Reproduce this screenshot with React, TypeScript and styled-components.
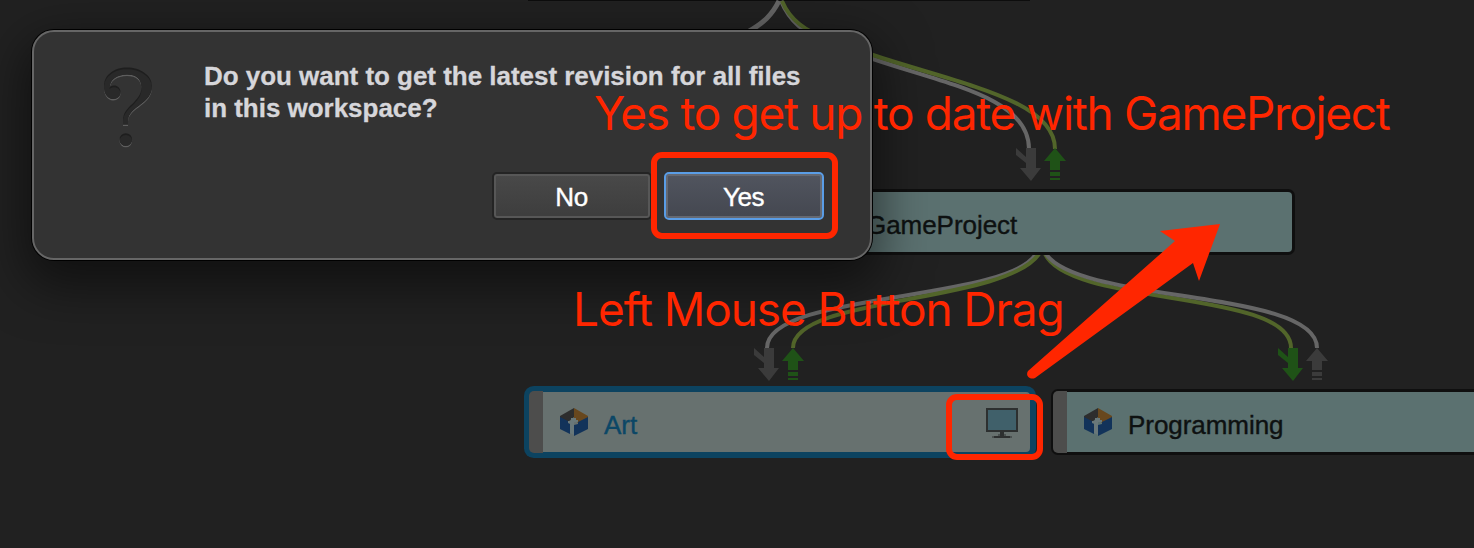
import React from "react";
import styled, { createGlobalStyle } from "styled-components";

const Global = createGlobalStyle`
  body { margin: 0; background: #212121; overflow: hidden; }
`;

const Canvas = styled.main`
  position: relative;
  width: 1474px;
  height: 548px;
  overflow: hidden;
  background: #212121;
  font-family: "Liberation Sans", Arial, sans-serif;
`;

const Links = styled.svg`
  position: absolute;
  inset: 0;
  fill: none;
`;

const Node = styled.div<{ $x: number; $y: number; $selected?: boolean }>`
  position: absolute;
  left: ${(p) => p.$x}px;
  top: ${(p) => p.$y}px;
  width: 500px;
  height: 60px;
  display: flex;
  align-items: center;
  border-radius: 4px;
  background: ${(p) => (p.$selected ? "#67716f" : "#5b7170")};
  color: ${(p) => (p.$selected ? "#0c4766" : "#0e1111")};
  box-shadow: 0 0 0 ${(p) => (p.$selected ? "6px #0c4360" : "3px #0f0f0f")};
`;

const Handle = styled.div`
  flex: none;
  width: 14px;
  height: 62px;
  margin: 0 17px 0 -1px;
  border-radius: 5px 0 0 5px;
  background: #4d4d4c;
`;

const NodeLabel = styled.span`
  font-size: 26px;
  line-height: 30px;
  margin: 5px 0 0 16px;
  letter-spacing: -0.05px;
  -webkit-text-stroke: 0.4px currentColor;
`;

const MonitorSlot = styled.div`
  display: flex;
  margin: 2px 12px 0 auto;
`;

const Dialog = styled.section`
  position: absolute;
  left: 32px;
  top: 30px;
  box-sizing: border-box;
  width: 840px;
  height: 230px;
  padding: 28px 46px 38px 68px;
  display: flex;
  border: 2px solid #666;
  border-radius: 22px;
  background: #333;
  box-shadow: 0 0 0 1px #000, 0 18px 50px 8px rgba(0, 0, 0, 0.5);
`;

const QuestionMark = styled.svg`
  flex: none;
  margin-top: 6px;
`;

const DialogBody = styled.div`
  flex: 1;
  display: flex;
  flex-direction: column;
  justify-content: space-between;
  margin-left: 46px;
`;

const Message = styled.p`
  margin: 0;
  font-size: 26px;
  font-weight: 700;
  line-height: 32px;
  letter-spacing: -0.03px;
  white-space: nowrap;
  color: #d6d6da;
  -webkit-text-stroke: 0.3px #d6d6da;
`;

const Buttons = styled.div`
  display: flex;
  justify-content: flex-end;
  gap: 12px;
`;

const Button = styled.button<{ $primary?: boolean }>`
  width: 160px;
  height: 48px;
  padding: 2px 1px 0 0;
  border: 2px solid ${(p) => (p.$primary ? "#5a9de6" : "#242424")};
  border-radius: 5px;
  font: 26px "Liberation Sans", Arial, sans-serif;
  letter-spacing: -0.4px;
  color: #fff;
  -webkit-text-stroke: 0.4px #fff;
  background: ${(p) => (p.$primary ? "linear-gradient(#51555f, #444750)" : "linear-gradient(#494949, #3d3d3d)")};
  box-shadow: inset 0 0 0 2px ${(p) => (p.$primary ? "#656972" : "#575757")};
`;

const Frame = styled.div<{ $x: number; $y: number; $w: number; $h: number }>`
  position: absolute;
  left: ${(p) => p.$x}px;
  top: ${(p) => p.$y}px;
  box-sizing: border-box;
  width: ${(p) => p.$w}px;
  height: ${(p) => p.$h}px;
  border: 6px solid #ff2600;
  border-radius: 11px;
`;

const Note = styled.div<{ $x: number; $y: number; $ls: number }>`
  position: absolute;
  left: ${(p) => p.$x}px;
  top: ${(p) => p.$y}px;
  font: 400 46px/56px Inter, sans-serif;
  font-feature-settings: "calt" 0;
  letter-spacing: ${(p) => p.$ls}px;
  white-space: nowrap;
  color: #ff2600;
`;

const CubeIcon = () => (
  <svg width="28" height="28" viewBox="0 0 28 28">
    <path d="M14 0 0 8v2l8 4 6-5z" fill="#2d2d2d" />
    <path d="M14 0l14 8v2l-10 5-4-5z" fill="#68471d" />
    <path d="M0 9l8 4v2l2 1v10L0 21zM28 9l-10 5v2l-4 1v11l14-7z" fill="#12335a" />
    <path d="M11 10h5v2h2v2h-4v13l-4-2V15H8v-2h3z" fill="#69787a" />
  </svg>
);

const MonitorIcon = () => (
  <svg width="32" height="30" viewBox="0 0 32 30">
    <path d="M1 1h30v22H1z" fill="#40606a" stroke="#2d3030" strokeWidth="2" />
    <path d="M14 24h4v4h6v2H8v-2h6z" fill="#2d3030" />
    <path d="M6 28h2v2H6zM24 28h2v2h-2zM12 26h2v2h-2zM18 26h2v2h-2z" fill="#4a5150" />
  </svg>
);

const questionShape =
  "M21 58.5H26V54C27 40 50 38 50 20C50 9 38 1.5 25 1.5C12 1.5 2 9 2 20C2 28 6 33 11 33C15.5 33 18.5 30 18.5 26C18.5 22 15.5 19.5 12 19.5C9.5 19.5 8 20.5 7.5 21.5C8 13.5 15 8.5 25 8.5C34 8.5 39.5 13 39.5 21C39.5 36 21 40 21 54ZM17.5 73.5a6.3 6.3 0 1 0 12.6 0a6.3 6.3 0 1 0 -12.6 0";

const DownArrow = ({ x, y, color }: { x: number; y: number; color: string }) => (
  <path transform={`translate(${x} ${y})`} fill={color} d="M10 0h10v20h5L15 33 4 20h6v-5L0 7V0l10 9z" />
);

const UpArrow = ({ x, y, color }: { x: number; y: number; color: string }) => (
  <path transform={`translate(${x} ${y})`} fill={color} d="M11 0l11 13h-6v9H6v-9H0zM6 24h10v4H6zM6 30h10v2H6z" />
);

export default function App() {
  return (
    <Canvas>
      <Global />
      <Links width="1474" height="548">
        <path d="M528 0H1030" stroke="#0d0d0d" strokeWidth="2" />
        <g strokeWidth="4">
          <path d="M779 1C772 15 764 23 746 33" stroke="#666" strokeWidth="5" />
          <path d="M781 1C789 20 803 34 830 44L873 59C950 85 1029 98 1029 149" stroke="#666" />
          <path d="M782 1C790 20 805 31 830 40L873 55C960 84 1055 100 1055 149" stroke="#52652a" />
          <path d="M1036 254C1006 302 767 292 767 348" stroke="#666" />
          <path d="M1039 254C1004 304 793 296 793 348" stroke="#52652a" />
          <path d="M1045 254C1070 307 1291 289 1291 348" stroke="#52652a" />
          <path d="M1046 254C1080 304 1317 289 1317 348" stroke="#666" />
        </g>
        <DownArrow x={1016} y={148} color="#3b3b3b" />
        <UpArrow x={1044} y={148} color="#1f5217" />
        <DownArrow x={754} y={348} color="#3b3b3b" />
        <UpArrow x={782} y={348} color="#1f5217" />
        <DownArrow x={1278} y={348} color="#1f5217" />
        <UpArrow x={1306} y={348} color="#3b3b3b" />
      </Links>

      <Node $x={792} $y={192}>
        <Handle />
        <CubeIcon />
        <NodeLabel>GameProject</NodeLabel>
      </Node>
      <Node $x={530} $y={392} $selected>
        <Handle />
        <CubeIcon />
        <NodeLabel>Art</NodeLabel>
        <MonitorSlot>
          <MonitorIcon />
        </MonitorSlot>
      </Node>
      <Node $x={1054} $y={392}>
        <Handle />
        <CubeIcon />
        <NodeLabel>Programming</NodeLabel>
      </Node>

      <Dialog>
        <QuestionMark width="56" height="84" viewBox="0 0 56 84">
          <clipPath id="question">
            <path d={questionShape} />
          </clipPath>
          <path d={questionShape} fill="#5e5e5e" transform="translate(0 1.5)" />
          <path d={questionShape} fill="#1e1e1e" />
          <g clipPath="url(#question)">
            <path d={questionShape} fill="#292929" transform="translate(0 1.8)" />
          </g>
        </QuestionMark>
        <DialogBody>
          <Message>
            Do you want to get the latest revision for all files
            <br />
            in this workspace?
          </Message>
          <Buttons>
            <Button>No</Button>
            <Button $primary>Yes</Button>
          </Buttons>
        </DialogBody>
      </Dialog>

      <Note $x={594} $y={85} $ls={-1.32}>Yes to get up to date with GameProject</Note>
      <Note $x={573} $y={281} $ls={-1.1}>Left Mouse Button Drag</Note>
      <Frame $x={651} $y={152} $w={187} $h={87} />
      <Frame $x={946} $y={394} $w={97} $h={66} />
      <Links width="1474" height="548">
        <path fill="#ff2600" d="M1028 371L1175 241L1160 231L1220 224L1199 281L1193 263L1035 378C1030 380 1025 376 1028 371Z" />
      </Links>
    </Canvas>
  );
}
